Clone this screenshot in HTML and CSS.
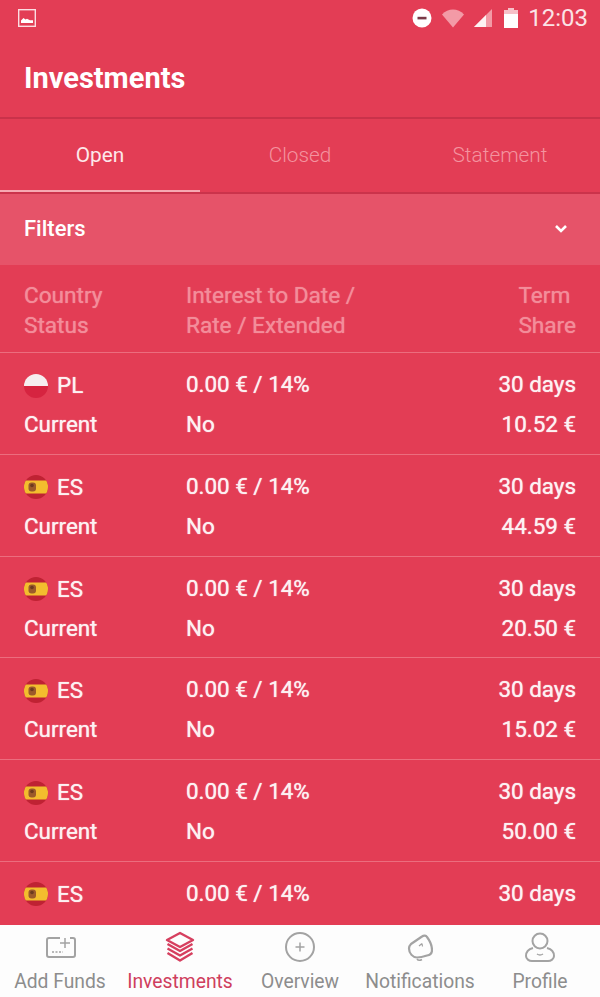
FILE: index.html
```html
<!DOCTYPE html>
<html>
    <head>
        <meta charset="utf-8">
        <title>Investments</title>
        <link rel="stylesheet" href="styles.css">
    </head>
    <body>
        <div class="app">
            <div class="topbar">
                <div class="status">
                    <svg class="pic-icon" width="18" height="18" viewBox="0 0 18 18">
                        <rect x="0.7" y="0.7" width="16.6" height="16.6" fill="none" stroke="#fbdde2" stroke-width="1.4"/>
                        <path d="M3 14v-2.500l2.500-2.500 2 1.500 1.500-.8 3 1.500h3v2.800z" fill="#fff"/>
                    </svg>
                    <div class="status-right">
                        <svg width="22" height="22" viewBox="0 0 22 22">
                            <circle cx="11" cy="11" r="9.500" fill="#fff"/>
                            <rect x="6.500" y="9.800" width="9" height="2.600" fill="#7a3a48"/>
                        </svg>
                        <svg class="wifi" width="24" height="20" viewBox="0 0 24 20">
                            <path d="M1 6.500C4 3 8 1.500 12 1.500S20 3 23 6.500L12 19.500z" fill="#f39aa6"/>
                        </svg>
                        <svg class="signal" width="20" height="20" viewBox="0 0 20 20">
                            <path d="M1 19L19 1v18z" fill="#f39aa6"/>
                            <path d="M1 19L13 7v12z" fill="#fdf2f3"/>
                        </svg>
                        <svg class="battery" width="14" height="22" viewBox="0 0 14 22">
                            <path d="M4 1h6v2h4v4H0V3h4z" fill="#f7c0c8"/>
                            <rect y="7" width="14" height="14" fill="#fff"/>
                        </svg>
                        <span class="clock">12:03</span>
                    </div>
                </div>
                <div class="title">Investments</div>
            </div>

            <div class="tabs">
                <div class="tab active">Open</div>
                <div class="tab">Closed</div>
                <div class="tab">Statement</div>
            </div>

            <div class="filters">
                <span>Filters</span>
                <svg width="14" height="10" viewBox="0 0 14 10">
                    <path d="M2 2l5 5 5-5" fill="none" stroke="#fff" stroke-width="2.600"/>
                </svg>
            </div>

            <div class="list">
                <div class="row head">
                    <div class="cell-a">Country<br>Status</div>
                    <div class="cell-b">Interest to Date /<br>Rate / Extended</div>
                    <div class="cell-c"><span class="term-head">Term<br>Share</span></div>
                </div>

                <div class="row">
                    <div class="cell-a">
                        <div class="country">
                            <svg class="flag" viewBox="0 0 24 24"><use href="#flag-pl"/></svg>PL
                        </div>
                        <div class="line">Current</div>
                    </div>
                    <div class="cell-b"><div class="line">0.00 € / 14%</div><div class="line">No</div></div>
                    <div class="cell-c"><div class="line">30 days</div><div class="line">10.52 €</div></div>
                </div>
                <div class="row">
                    <div class="cell-a">
                        <div class="country">
                            <svg class="flag" viewBox="0 0 24 24"><use href="#flag-es"/></svg>ES
                        </div>
                        <div class="line">Current</div>
                    </div>
                    <div class="cell-b"><div class="line">0.00 € / 14%</div><div class="line">No</div></div>
                    <div class="cell-c"><div class="line">30 days</div><div class="line">44.59 €</div></div>
                </div>
                <div class="row">
                    <div class="cell-a">
                        <div class="country">
                            <svg class="flag" viewBox="0 0 24 24"><use href="#flag-es"/></svg>ES
                        </div>
                        <div class="line">Current</div>
                    </div>
                    <div class="cell-b"><div class="line">0.00 € / 14%</div><div class="line">No</div></div>
                    <div class="cell-c"><div class="line">30 days</div><div class="line">20.50 €</div></div>
                </div>
                <div class="row">
                    <div class="cell-a">
                        <div class="country">
                            <svg class="flag" viewBox="0 0 24 24"><use href="#flag-es"/></svg>ES
                        </div>
                        <div class="line">Current</div>
                    </div>
                    <div class="cell-b"><div class="line">0.00 € / 14%</div><div class="line">No</div></div>
                    <div class="cell-c"><div class="line">30 days</div><div class="line">15.02 €</div></div>
                </div>
                <div class="row">
                    <div class="cell-a">
                        <div class="country">
                            <svg class="flag" viewBox="0 0 24 24"><use href="#flag-es"/></svg>ES
                        </div>
                        <div class="line">Current</div>
                    </div>
                    <div class="cell-b"><div class="line">0.00 € / 14%</div><div class="line">No</div></div>
                    <div class="cell-c"><div class="line">30 days</div><div class="line">50.00 €</div></div>
                </div>
                <div class="row">
                    <div class="cell-a">
                        <div class="country">
                            <svg class="flag" viewBox="0 0 24 24"><use href="#flag-es"/></svg>ES
                        </div>
                    </div>
                    <div class="cell-b"><div class="line">0.00 € / 14%</div></div>
                    <div class="cell-c"><div class="line">30 days</div></div>
                </div>
            </div>

            <div class="nav">
                <div class="nav-item">
                    <svg width="32" height="28" viewBox="0 0 32 28" fill="none" stroke="#a3a3a3" stroke-width="2">
                        <path d="M16 7H5Q3 7 3 9v15q0 2 2 2h24q2 0 2-2V9q0-2-2-2h-3"/>
                        <path d="M21 7v10M16 12h10" stroke-width="1.500"/>
                        <path d="M8 21h11" stroke-width="1.500" stroke-dasharray="2 1.500"/>
                    </svg>
                    <span>Add Funds</span>
                </div>
                <div class="nav-item current">
                    <svg width="32" height="32" viewBox="0 0 32 32" fill="none" stroke="#d63f5f" stroke-width="2.400" stroke-linejoin="round">
                        <path d="M16 2l13 7-13 7-13-7z"/>
                        <path d="M3.500 13L16 20l12.500-7"/>
                        <path d="M3.500 17.500L16 24.500l12.500-7"/>
                        <path d="M3.500 22L16 29.500 28.500 22"/>
                    </svg>
                    <span>Investments</span>
                </div>
                <div class="nav-item">
                    <svg width="32" height="32" viewBox="0 0 32 32" fill="none" stroke="#a3a3a3" stroke-width="2">
                        <circle cx="16" cy="16" r="14"/>
                        <path d="M16 11.500v9M11.500 16h9" stroke-width="1.500"/>
                    </svg>
                    <span>Overview</span>
                </div>
                <div class="nav-item">
                    <svg width="26" height="32" viewBox="0 0 26 32" fill="none" stroke="#a3a3a3" stroke-width="2.200" stroke-linejoin="round">
                        <path d="M15 5.500c2-1.500 4-1 5 .5 3 4 5 9 5 13 0 3-2 5-5 5.500-3 1-7 2-10 2-4 0-8-4-8-9 0-2 1-3.500 2-4.500z"/>
                        <path d="M10 28c1 1.500 3 1.500 5 .5" stroke-width="1.600"/>
                        <path d="M12 15l3-2.500M15 12.500l.5 3" stroke-width="1.200"/>
                    </svg>
                    <span>Notifications</span>
                </div>
                <div class="nav-item">
                    <svg width="32" height="32" viewBox="0 0 32 32" fill="none" stroke="#a3a3a3" stroke-width="2">
                        <circle cx="16" cy="10" r="7.500"/>
                        <path d="M9 17c-4 1-7 4-7 8 0 3 3 5 6 5h16c3 0 6-2 6-5 0-4-3-7-7-8"/>
                        <path d="M13 23q3 2 6 0" stroke-width="1.500"/>
                    </svg>
                    <span>Profile</span>
                </div>
            </div>
        </div>

        <svg class="defs" width="0" height="0">
            <defs>
                <clipPath id="round"><circle cx="12" cy="12" r="12"/></clipPath>
                <g id="flag-pl" clip-path="url(#round)">
                    <rect width="24" height="12" fill="#f6eef0"/>
                    <rect y="12" width="24" height="12" fill="#d62440"/>
                </g>
                <g id="flag-es" clip-path="url(#round)">
                    <rect width="24" height="24" fill="#bf2233"/>
                    <rect y="5.500" width="24" height="13" fill="#f3bd2e"/>
                    <rect x="4.500" y="7.500" width="7.500" height="9" rx="3" fill="#9c5a2a"/>
                    <circle cx="8" cy="10.500" r="1.800" fill="#6d3a1e"/>
                </g>
            </defs>
        </svg>
    </body>
</html>
```

FILE: styles.css
```css
html, body {
    margin: 0;
    padding: 0;
}
body {
    font-family: Roboto, "Liberation Sans", sans-serif;
    background-color: #e33d55;
}
.app {
    width: 600px;
    height: 997px;
    display: flex;
    flex-direction: column;
    overflow: hidden;
    color: #fdf1f2;
}
.defs {
    position: absolute;
}

/* top */
.topbar {
    height: 117px;
    flex: none;
    background-color: #e33d55;
    border-bottom: 2px solid #c9324a;
}
.status {
    height: 36px;
    padding: 0 12px 0 18px;
    display: flex;
    align-items: center;
    justify-content: space-between;
}
.status-right {
    display: flex;
    align-items: center;
}
.wifi {
    margin-left: 8px;
}
.signal {
    margin-left: 8px;
}
.battery {
    margin-left: 11px;
}
.clock {
    margin-left: 10px;
    font-size: 24px;
    color: #fbe3e6;
}
.title {
    padding: 24px 24px 0;
    font-size: 29px;
    line-height: 36px;
    font-weight: 700;
    color: #fff;
}

/* tabs */
.tabs {
    height: 75px;
    flex: none;
    display: flex;
    border-bottom: 2px solid #cb334b;
    box-sizing: border-box;
    background-color: #e33d55;
}
.tab {
    flex: 1;
    text-align: center;
    font-size: 20.800px;
    line-height: 72px;
    font-weight: 300;
    color: #f4939f;
}
.tab.active {
    color: #fde8ea;
    font-weight: 400;
    box-shadow: inset 0 -2px 0 #f7a9b2;
}

/* filters */
.filters {
    height: 71px;
    flex: none;
    padding: 0 32px 2px 24px;
    box-sizing: border-box;
    display: flex;
    align-items: center;
    justify-content: space-between;
    background-color: #e65369;
    font-size: 22px;
    font-weight: 500;
    color: #fff;
}

/* table */
.list {
    flex: 1;
    overflow: hidden;
    min-height: 0;
}
.row {
    height: 101.800px;
    padding: 13px 24px 0;
    display: flex;
    box-sizing: border-box;
    border-bottom: 1px solid #ec6d7e;
    font-size: 22.400px;
    line-height: 39px;
    text-shadow: 0 0 1px #fdf1f2;
}
.row .cell-b, .row .cell-c {
    margin-top: -1px;
}
.line + .line {
    margin-top: 1px;
}
.row.head {
    height: 88px;
    padding-top: 16px;
    font-size: 22.600px;
    line-height: 30px;
    color: #f38d9a;
    text-shadow: 0 0 1px #f38d9a;
}
.row.head .cell-b, .row.head .cell-c {
    margin-top: 0;
}
.cell-a {
    width: 162px;
    flex: none;
}
.cell-b {
    flex: 1;
}
.cell-c {
    text-align: right;
}
.term-head {
    display: inline-block;
    text-align: left;
}
.country {
    display: flex;
    align-items: center;
    height: 39px;
}
.flag {
    width: 24px;
    height: 24px;
    margin-right: 9px;
}

/* bottom nav */
.nav {
    height: 72px;
    flex: none;
    display: flex;
    background-color: #fdfdfd;
    color: #8d8d8d;
    font-size: 19.300px;
}
.nav-item {
    flex: 1;
    height: 72px;
    display: flex;
    flex-direction: column;
    align-items: center;
    justify-content: flex-end;
    white-space: nowrap;
    position: relative;
    line-height: 26px;
    padding-bottom: 2px;
    box-sizing: border-box;
}
.nav-item svg {
    position: absolute;
    top: 6px;
}
.nav-item.current {
    color: #cf3f5e;
}
```
